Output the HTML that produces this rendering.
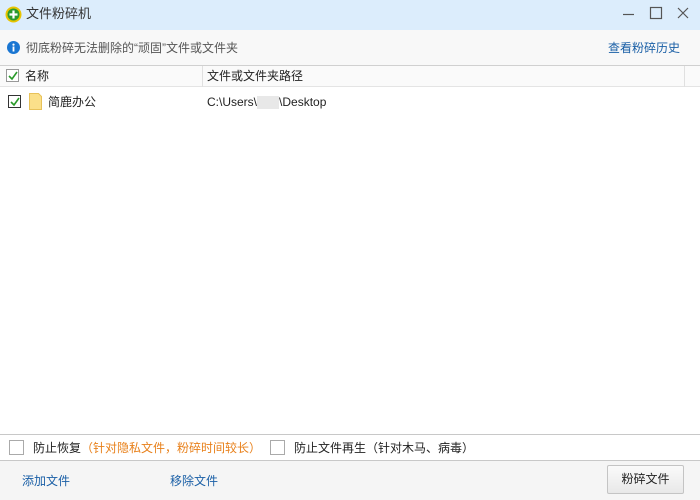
<!DOCTYPE html>
<html><head><meta charset="utf-8"><style>
*{margin:0;padding:0;box-sizing:border-box}
body{width:700px;height:500px;overflow:hidden;background:#fff;font-family:"Liberation Sans","Noto Sans CJK SC",sans-serif;font-size:12px;color:#222;position:relative}
.a{position:absolute}
.t{line-height:14px}
.cb{position:absolute;width:13px;height:13px;border:1px solid #8a8a8a;background:#fff}
</style></head><body>
<div class="a" style="left:0;top:0;width:700px;height:30px;background:#dcedfc"></div>
<svg class="a" style="left:5px;top:6px" width="17" height="17" viewBox="0 0 17 17"><circle cx="8.5" cy="8.5" r="8" fill="#e8c400"/><circle cx="8.5" cy="8.5" r="6" fill="#2c9a2c"/><path d="M8.5 4.5v8M4.5 8.5h8" stroke="#fff" stroke-width="2.2"/></svg>
<div class="a t" style="left:26px;top:6px;font-size:13px;color:#333;line-height:16px">文件粉碎机</div>
<svg class="a" style="left:620px;top:6px" width="75" height="16"><path d="M3 8.5h11" stroke="#555" stroke-width="1.2"/><rect x="30.5" y="1.5" width="11" height="11" fill="none" stroke="#555" stroke-width="1.2"/><path d="M58 2l10 10M68 2l-10 10" stroke="#555" stroke-width="1.2"/></svg>
<div class="a" style="left:0;top:30px;width:700px;height:35px;background:#f8f8f8"></div>
<svg class="a" style="left:7px;top:41px" width="13" height="13"><circle cx="6.5" cy="6.5" r="6.5" fill="#1a76d2"/><rect x="5.6" y="5.5" width="1.8" height="5" fill="#fff"/><circle cx="6.5" cy="3.6" r="1.1" fill="#fff"/></svg>
<div class="a t" style="left:26px;top:41px;color:#555">彻底粉碎无法删除的“顽固”文件或文件夹</div>
<div class="a t" style="left:608px;top:41px;color:#1a5fa6">查看粉碎历史</div>
<div class="a" style="left:0;top:65px;width:700px;height:1px;background:#d0d0d0"></div>
<div class="a" style="left:0;top:66px;width:700px;height:21px;background:#fafafa;border-bottom:1px solid #e4e4e4"></div>
<div class="a" style="left:202px;top:66px;width:1px;height:21px;background:#e0e0e0"></div>
<div class="a" style="left:684px;top:66px;width:1px;height:21px;background:#e0e0e0"></div>
<div class="cb" style="left:6px;top:69px;border-color:#999"></div>
<svg class="a" style="left:7px;top:70px" width="12" height="12"><path d="M2 6l3 3 5-7" fill="none" stroke="#2a9a2a" stroke-width="1.6"/></svg>
<div class="a t" style="left:25px;top:69px">名称</div>
<div class="a t" style="left:207px;top:69px">文件或文件夹路径</div>
<div class="cb" style="left:8px;top:95px;border-color:#333"></div>
<svg class="a" style="left:9px;top:96px" width="12" height="12"><path d="M2 6l3 3 5-7" fill="none" stroke="#2a9a2a" stroke-width="1.6"/></svg>
<svg class="a" style="left:29px;top:93px" width="13" height="17"><path d="M0.5 0.5h9l3 3v13h-12z" fill="#fbe08a" stroke="#e8c25a"/></svg>
<div class="a t" style="left:48px;top:95px">简鹿办公</div>
<div class="a t" style="left:207px;top:95px">C:\Users\<span style="display:inline-block;width:22px;height:13px;background:#e8e8e8;vertical-align:middle"></span>\Desktop</div>
<div class="a" style="left:0;top:434px;width:700px;height:1px;background:#c8c8c8"></div>
<div class="cb" style="left:9px;top:440px;border-color:#aaa;width:15px;height:15px"></div>
<div class="a t" style="left:33px;top:441px">防止恢复<span style="color:#e8801a">（针对隐私文件，粉碎时间较长）</span></div>
<div class="cb" style="left:270px;top:440px;border-color:#aaa;width:15px;height:15px"></div>
<div class="a t" style="left:294px;top:441px">防止文件再生（针对木马、病毒）</div>
<div class="a" style="left:0;top:460px;width:700px;height:40px;background:#f5f5f5;border-top:1px solid #c8c8c8"></div>
<div class="a t" style="left:22px;top:474px;color:#1a5fa6">添加文件</div>
<div class="a t" style="left:170px;top:474px;color:#1a5fa6">移除文件</div>
<div class="a" style="left:607px;top:465px;width:77px;height:29px;border:1px solid #c4c4c4;background:linear-gradient(#fafafa,#e8e8e8);text-align:center;line-height:27px;border-radius:2px">粉碎文件</div>
</body></html>
